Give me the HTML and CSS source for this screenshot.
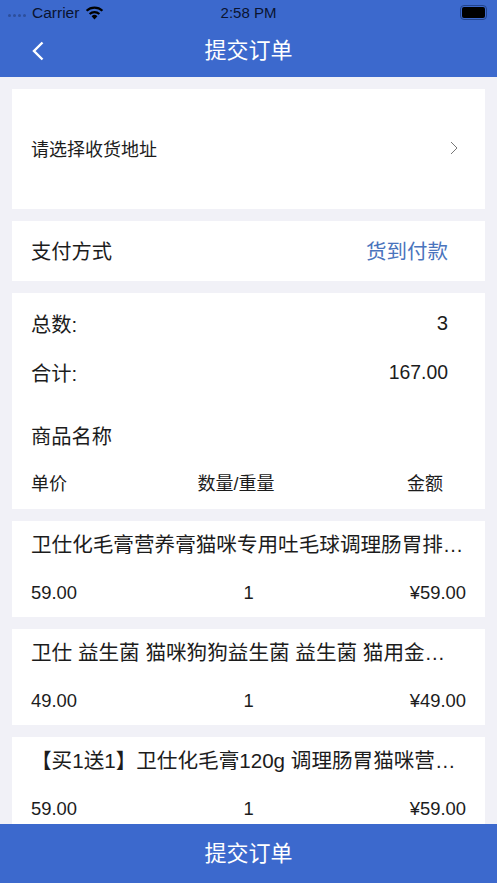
FILE: index.html
```html
<!DOCTYPE html>
<html lang="zh">

<head>
    <meta charset="UTF-8">
    <meta name="viewport" content="width=device-width, initial-scale=1.0">
    <title>提交订单</title>
    <link rel="stylesheet" href="styles.css">
</head>

<body>
    <header class="top">
        <div class="status">
            <div class="status-left">
                <span class="dots"><i></i><i></i><i></i><i></i></span>
                <span class="carrier">Carrier</span>
                <svg class="wifi" width="19" height="14" viewBox="0 0 19 14">
                    <path d="M9.5 13.5 L6.6 10.2 A4.2 4.2 0 0 1 12.4 10.2 Z" fill="#000" />
                    <path d="M4.6 8 A7.2 7.2 0 0 1 14.4 8" fill="none" stroke="#000" stroke-width="2.2" />
                    <path d="M1.6 4.8 A11.6 11.6 0 0 1 17.4 4.8" fill="none" stroke="#000" stroke-width="2.2" />
                </svg>
            </div>
            <div class="status-time">2:58 PM</div>
            <div class="battery"><span></span></div>
        </div>
        <div class="nav">
            <svg class="back" width="14" height="20" viewBox="0 0 14 20">
                <path d="M11.5 1.5 L3 10 L11.5 18.5" fill="none" stroke="#fff" stroke-width="2.4" />
            </svg>
            <span>提交订单</span>
        </div>
    </header>

    <main class="content">
        <section class="card address">
            <span>请选择收货地址</span>
            <svg width="8" height="14" viewBox="0 0 8 14">
                <path d="M1 1 L7 7 L1 13" fill="none" stroke="#777" stroke-width="1" />
            </svg>
        </section>

        <section class="card pay">
            <span>支付方式</span>
            <span class="pay-value">货到付款</span>
        </section>

        <section class="card summary">
            <div class="summary-row"><span>总数:</span><span>3</span></div>
            <div class="summary-row"><span>合计:</span><span class="summary-value">167.00</span></div>
            <div class="goods-title">商品名称</div>
            <div class="cols">
                <span>单价</span>
                <span class="col-mid">数量/重量</span>
                <span class="col-end">金额</span>
            </div>
        </section>

        <section class="card item">
            <div class="item-name">卫仕化毛膏营养膏猫咪专用吐毛球调理肠胃排…</div>
            <div class="item-row"><span>59.00</span><span class="item-qty">1</span><span class="item-total">¥59.00</span></div>
        </section>

        <section class="card item">
            <div class="item-name">卫仕 益生菌 猫咪狗狗益生菌 益生菌 猫用金…</div>
            <div class="item-row"><span>49.00</span><span class="item-qty">1</span><span class="item-total">¥49.00</span></div>
        </section>

        <section class="card item">
            <div class="item-name">【买1送1】卫仕化毛膏120g 调理肠胃猫咪营…</div>
            <div class="item-row"><span>59.00</span><span class="item-qty">1</span><span class="item-total">¥59.00</span></div>
        </section>
    </main>

    <footer class="submit">提交订单</footer>
</body>

</html>
```

FILE: styles.css
```css
html,
body {
    height: 100%;
}

body {
    margin: 0;
    display: flex;
    flex-direction: column;
    overflow: hidden;
    background-color: #f1f1f7;
    color: #1c1c1c;
    font-family: "Liberation Sans", "Noto Sans CJK SC", sans-serif;
}

.top {
    flex: none;
    height: 77px;
    background-color: #3c69cd;
}

.status {
    display: grid;
    grid-template-columns: 1fr auto 1fr;
    align-items: center;
    height: 25px;
    font-size: 15px;
    color: #0a1430;
}

.status-left {
    display: flex;
    align-items: center;
    gap: 6px;
    padding-left: 8px;
}

.carrier {
    font-size: 15.5px;
}

.dots {
    display: flex;
    gap: 2px;
    margin-top: 5px;
}

.dots i {
    width: 3px;
    height: 3px;
    border-radius: 50%;
    background-color: #2d4f9c;
}

.battery {
    justify-self: end;
    width: 23px;
    height: 11px;
    margin-right: 10px;
    padding: 1px;
    border: 1px solid #22438c;
    border-radius: 4px;
}

.battery span {
    display: block;
    height: 100%;
    border-radius: 2px;
    background-color: #000;
}

.nav {
    position: relative;
    display: flex;
    align-items: center;
    justify-content: center;
    height: 46px;
    padding-bottom: 6px;
    font-size: 22px;
    color: #fff;
}

.back {
    position: absolute;
    left: 31px;
    top: 16px;
}

.content {
    flex: 1;
    min-height: 0;
    overflow: hidden;
    display: flex;
    flex-direction: column;
    gap: 12px;
    padding: 12px;
}

.card {
    flex: none;
    background-color: #fff;
}

.address {
    display: flex;
    align-items: center;
    justify-content: space-between;
    height: 118px;
    padding: 0 27px 2px 19px;
    font-size: 18px;
}

.pay {
    display: flex;
    align-items: center;
    justify-content: space-between;
    height: 58px;
    padding: 0 37px 2px 19px;
    font-size: 20.3px;
}

.pay-value {
    color: #4a74bd;
    font-size: 20.5px;
}

.summary {
    height: 216px;
    padding: 0 37px 0 19px;
    font-size: 20.3px;
}

.summary-row {
    display: flex;
    align-items: center;
    justify-content: space-between;
    height: 48px;
    padding-top: 6px;
    margin-bottom: -5px;
}

.summary-value {
    font-size: 19.4px;
}

.goods-title {
    margin-top: 31px;
    line-height: 30px;
}

.cols {
    display: grid;
    grid-template-columns: 1fr 1fr 1fr;
    align-items: center;
    margin-top: 19px;
    font-size: 18px;
    line-height: 26px;
}

.col-mid {
    text-align: center;
    padding-right: 7px;
    white-space: nowrap;
}

.col-end {
    text-align: right;
    padding-right: 5px;
}

.item {
    height: 96px;
    padding: 0 19px;
    font-size: 20.6px;
}

.item-name {
    padding-top: 9px;
    line-height: 30px;
    white-space: nowrap;
}

.item-row {
    display: grid;
    grid-template-columns: 1fr 1fr 1fr;
    margin-top: 20px;
    font-size: 18.4px;
    line-height: 26px;
}

.item-qty {
    text-align: center;
}

.item-total {
    text-align: right;
}

.submit {
    flex: none;
    display: flex;
    align-items: center;
    justify-content: center;
    height: 53px;
    padding-bottom: 6px;
    background-color: #3c69cd;
    color: #fff;
    font-size: 22px;
}
```
